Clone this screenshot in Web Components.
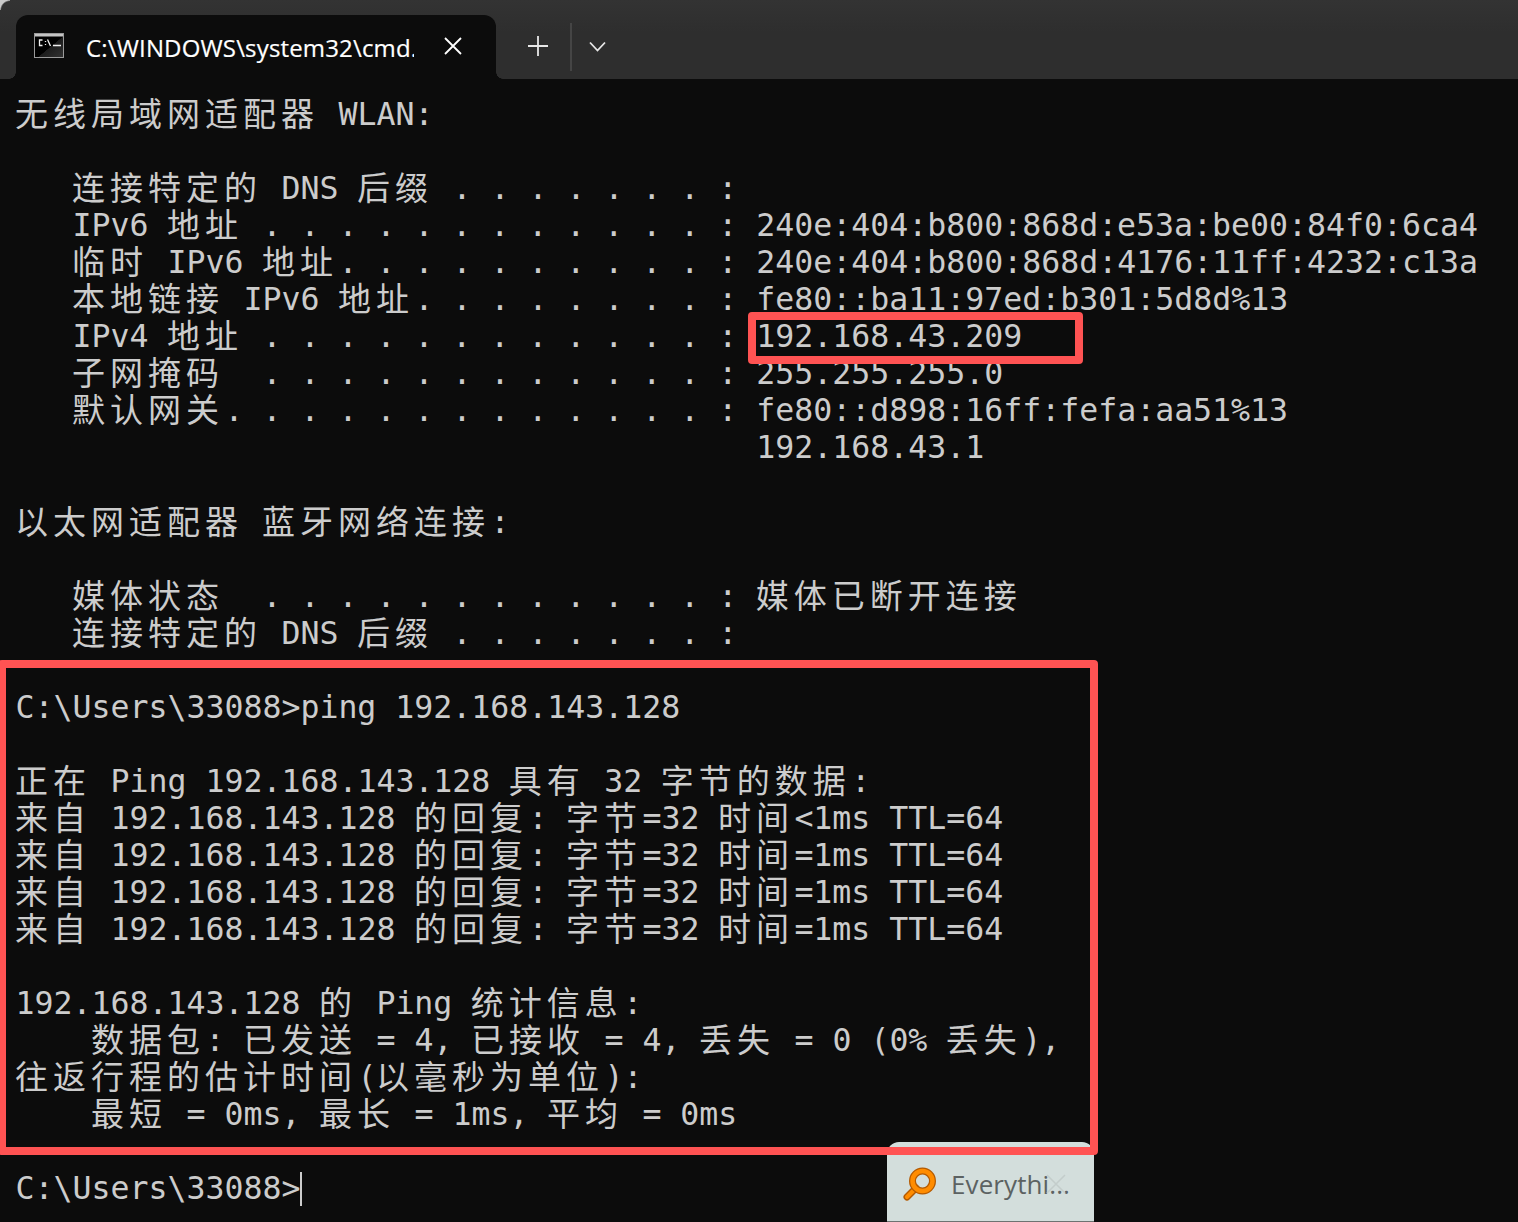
<!DOCTYPE html>
<html>
<head>
<meta charset="utf-8">
<title>cmd</title>
<style>
  html, body { margin: 0; height: 100%; background: #0c0c0c; }
</style>
</head>
<body>
<terminal-window>
  <title-bar slot="bar" title-text="C:\WINDOWS\system32\cmd.exe"></title-bar>
  <term-line>无线局域网适配器 WLAN:</term-line>
  <term-line></term-line>
  <term-line>   连接特定的 DNS 后缀 . . . . . . . :</term-line>
  <term-line>   IPv6 地址 . . . . . . . . . . . . : 240e:404:b800:868d:e53a:be00:84f0:6ca4</term-line>
  <term-line>   临时 IPv6 地址. . . . . . . . . . : 240e:404:b800:868d:4176:11ff:4232:c13a</term-line>
  <term-line>   本地链接 IPv6 地址. . . . . . . . : fe80::ba11:97ed:b301:5d8d%13</term-line>
  <term-line>   IPv4 地址 . . . . . . . . . . . . : 192.168.43.209</term-line>
  <term-line>   子网掩码  . . . . . . . . . . . . : 255.255.255.0</term-line>
  <term-line>   默认网关. . . . . . . . . . . . . : fe80::d898:16ff:fefa:aa51%13</term-line>
  <term-line>                                       192.168.43.1</term-line>
  <term-line></term-line>
  <term-line>以太网适配器 蓝牙网络连接:</term-line>
  <term-line></term-line>
  <term-line>   媒体状态  . . . . . . . . . . . . : 媒体已断开连接</term-line>
  <term-line>   连接特定的 DNS 后缀 . . . . . . . :</term-line>
  <term-line></term-line>
  <term-line>C:\Users\33088>ping 192.168.143.128</term-line>
  <term-line></term-line>
  <term-line>正在 Ping 192.168.143.128 具有 32 字节的数据:</term-line>
  <term-line>来自 192.168.143.128 的回复: 字节=32 时间&lt;1ms TTL=64</term-line>
  <term-line>来自 192.168.143.128 的回复: 字节=32 时间=1ms TTL=64</term-line>
  <term-line>来自 192.168.143.128 的回复: 字节=32 时间=1ms TTL=64</term-line>
  <term-line>来自 192.168.143.128 的回复: 字节=32 时间=1ms TTL=64</term-line>
  <term-line></term-line>
  <term-line>192.168.143.128 的 Ping 统计信息:</term-line>
  <term-line>    数据包: 已发送 = 4, 已接收 = 4, 丢失 = 0 (0% 丢失),</term-line>
  <term-line>往返行程的估计时间(以毫秒为单位):</term-line>
  <term-line>    最短 = 0ms, 最长 = 1ms, 平均 = 0ms</term-line>
  <term-line></term-line>
  <term-line cursor>C:\Users\33088></term-line>
  <mark-box slot="over" style="left:748px;top:312px;width:335px;height:52px"></mark-box>
  <mark-box slot="over" style="left:-2px;top:660px;width:1100px;height:495px"></mark-box>
  <app-toast slot="over" label="Everythi..."></app-toast>
</terminal-window>

<script>
// page frame: tab bar on top, lines below, overlays on top of them
const windowTemplate = document.createElement('template');
windowTemplate.innerHTML = `
<style>
  :host {
    display: flex;
    flex-direction: column;
    position: relative;
    width: 1518px;
    height: 1222px;
    overflow: hidden;
    background: #0c0c0c;
  }
  .lines {
    padding: 17px 0 0 15.500px;
  }
</style>
<slot name="bar"></slot>
<div class="lines"><slot></slot></div>
<slot name="over"></slot>
`;

class TerminalWindow extends HTMLElement {
  constructor() {
    super();
    this.attachShadow({ mode: 'open' });
    this.shadowRoot.appendChild(windowTemplate.content.cloneNode(true));
  }
}

// tab strip
const barTemplate = document.createElement('template');
barTemplate.innerHTML = `
<style>
  :host {
    display: flex;
    align-items: flex-end;
    position: relative;
    height: 79px;
    flex: none;
    padding-left: 16px;
    box-sizing: border-box;
    background: linear-gradient(#333333, #2e2e2e 40%);
    color: #fff;
    font-family: "Open Sans", "Noto Sans", sans-serif;
  }
  /* pale window corner showing behind the rounded frame */
  :host::before {
    content: "";
    position: absolute;
    left: 0;
    top: 0;
    width: 10px;
    height: 10px;
    background: radial-gradient(circle at 100% 100%, transparent 8.500px, #c9c9c9 10px);
  }
  .tab {
    display: flex;
    align-items: center;
    position: relative;
    width: 480px;
    height: 64px;
    box-sizing: border-box;
    padding: 0 0 3px 18px;
    background: #0c0c0c;
    border-radius: 12px 12px 0 0;
  }
  /* small flares where the tab meets the console */
  .tab::before, .tab::after {
    content: "";
    position: absolute;
    bottom: 0;
    width: 7px;
    height: 7px;
  }
  .tab::before {
    right: 100%;
    background: radial-gradient(circle at 0 0, #2e2e2e 6.500px, #0c0c0c 7px);
  }
  .tab::after {
    left: 100%;
    background: radial-gradient(circle at 100% 0, #2e2e2e 6.500px, #0c0c0c 7px);
  }
  .name {
    width: 328px;
    margin: 4px 0 0 22px;
    overflow: hidden;
    white-space: nowrap;
    font-size: 24px;
    line-height: 34px;
    letter-spacing: 0.16px;
    -webkit-text-stroke: 0.2px #fff;
  }
  svg { display: block; flex: none; }
  .close { margin-left: 30px; }
  .plus { margin: 0 0 23px 32px; }
  .rule { width: 2px; height: 48px; margin: 0 0 8px 22px; background: #454545; }
  .more { margin: 0 0 27px 17px; }
</style>
<div class="tab">
  <svg width="30" height="25" viewBox="0 0 30 25">
    <defs>
      <linearGradient id="screen" x1="0" y1="0" x2="1" y2="1">
        <stop offset=".55" stop-color="#000"/>
        <stop offset=".56" stop-color="#1c1c1c"/>
        <stop offset="1" stop-color="#333"/>
      </linearGradient>
    </defs>
    <rect x=".5" y=".5" width="29" height="24" fill="url(#screen)" stroke="#9a9a9a"/>
    <rect x="1" y="1" width="28" height="2.500" fill="#c4c4c4"/>
    <path d="M8.500 7H5.500V12.500H8.500M11.500 8v1M11.500 11v1M13.500 6.500l3 6.500M19 12.500h8" stroke="#eee" stroke-width="1.300" fill="none"/>
  </svg>
  <div class="name"></div>
  <svg class="close" width="18" height="18" viewBox="0 0 18 18"><path d="M1 1l16 16M17 1L1 17" stroke="#fff" stroke-width="1.800" fill="none"/></svg>
</div>
<svg class="plus" width="20" height="20" viewBox="0 0 20 20"><path d="M10 0v20M0 10h20" stroke="#e8e8e8" stroke-width="1.800" fill="none"/></svg>
<div class="rule"></div>
<svg class="more" width="17" height="11" viewBox="0 0 17 11"><path d="M1 1.500l7.500 8 7.500-8" stroke="#e8e8e8" stroke-width="1.800" fill="none"/></svg>
`;

class TitleBar extends HTMLElement {
  constructor() {
    super();
    this.attachShadow({ mode: 'open' });
    this.shadowRoot.appendChild(barTemplate.content.cloneNode(true));
  }

  connectedCallback() {
    this.shadowRoot.querySelector('.name').textContent = this.getAttribute('title-text');
  }
}

// one row of console text, CJK characters take two cells
const lineTemplate = document.createElement('template');
lineTemplate.innerHTML = `
<style>
  :host {
    display: block;
    height: 37.050px;
    line-height: 37.050px;
    color: #cccccc;
    font-family: "DejaVu Sans Mono", monospace;
    font-size: 31.560px;
  }
  .text { white-space: pre; }
  .cjk {
    font-family: "Noto Sans CJK SC", sans-serif;
    font-size: 33px;
    letter-spacing: 5px;
    line-height: 0;
    vertical-align: -1px;
    margin-left: -0.500px;
    margin-right: 0.500px;
  }
  .cursor {
    display: inline-block;
    width: 2px;
    height: 34px;
    vertical-align: -7px;
    background: #ccc;
  }
</style>
<span class="text"></span>
`;

class TermLine extends HTMLElement {
  constructor() {
    super();
    this.attachShadow({ mode: 'open' });
    this.shadowRoot.appendChild(lineTemplate.content.cloneNode(true));
  }

  connectedCallback() {
    const box = this.shadowRoot.querySelector('.text');
    // split the row in runs so the CJK runs get their own font
    const runs = this.textContent.match(/[\u4e00-\u9fff]+|[^\u4e00-\u9fff]+/g) || [];
    runs.forEach(run => {
      const span = document.createElement('span');
      if (/[\u4e00-\u9fff]/.test(run)) span.className = 'cjk';
      span.textContent = run;
      box.appendChild(span);
    });
    if (this.hasAttribute('cursor')) {
      const cursor = document.createElement('span');
      cursor.className = 'cursor';
      box.appendChild(cursor);
    }
  }
}

// red annotation rectangle
const markTemplate = document.createElement('template');
markTemplate.innerHTML = `
<style>
  :host {
    display: block;
    position: absolute;
    box-sizing: border-box;
    border: 8px solid #ff5353;
    border-radius: 4px;
    z-index: 2;
  }
</style>
`;

class MarkBox extends HTMLElement {
  constructor() {
    super();
    this.attachShadow({ mode: 'open' });
    this.shadowRoot.appendChild(markTemplate.content.cloneNode(true));
  }
}

// taskbar thumbnail that lies over the console
const toastTemplate = document.createElement('template');
toastTemplate.innerHTML = `
<style>
  :host {
    display: flex;
    align-items: center;
    position: absolute;
    left: 887px;
    top: 1142px;
    width: 207px;
    height: 80px;
    box-sizing: border-box;
    padding: 5px 0 0 15px;
    gap: 13px;
    background: #d3dedc;
    border-radius: 12px 12px 0 0;
    border-bottom: 1px solid #6d7371;
    color: #5c6262;
    font-family: "Open Sans", "Noto Sans", sans-serif;
    font-size: 26px;
    letter-spacing: 0.1px;
    z-index: 1;
  }
  svg { display: block; flex: none; }
  .x-mark { position: absolute; left: 158px; top: 31px; }
</style>
<svg width="36" height="36" viewBox="0 0 36 36">
  <path d="M5 31L14 22" stroke="#b45a00" stroke-width="7" stroke-linecap="round"/>
  <path d="M5 31L14 22" stroke="#ff8c00" stroke-width="4" stroke-linecap="round"/>
  <circle cx="20.500" cy="15" r="10" fill="none" stroke="#b45a00" stroke-width="7"/>
  <circle cx="20.500" cy="15" r="10" fill="none" stroke="#ff8c00" stroke-width="4.500"/>
</svg>
<span class="label"></span>
<svg class="x-mark" width="22" height="22" viewBox="0 0 22 22"><path d="M2 2l18 18M20 2L2 20" stroke="#c3cdcb" stroke-width="1.500" fill="none"/></svg>
`;

class AppToast extends HTMLElement {
  constructor() {
    super();
    this.attachShadow({ mode: 'open' });
    this.shadowRoot.appendChild(toastTemplate.content.cloneNode(true));
  }

  connectedCallback() {
    this.shadowRoot.querySelector('.label').textContent = this.getAttribute('label');
  }
}

window.customElements.define('terminal-window', TerminalWindow);
window.customElements.define('title-bar', TitleBar);
window.customElements.define('term-line', TermLine);
window.customElements.define('mark-box', MarkBox);
window.customElements.define('app-toast', AppToast);
</script>
</body>
</html>
